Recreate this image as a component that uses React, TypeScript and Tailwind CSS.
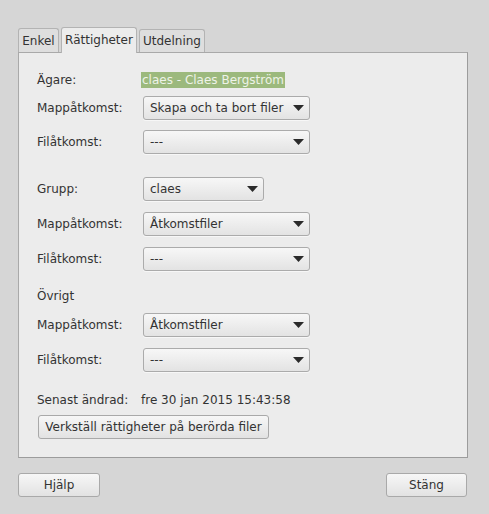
import React from "react";

const font = { fontFamily: '"DejaVu Sans", "Liberation Sans", sans-serif' };

function Arrow() {
  return (
    <svg width="11" height="6" viewBox="0 0 11 6" className="shrink-0">
      <path d="M0 0 L11 0 L5.5 6 Z" fill="#2b2b2b" />
    </svg>
  );
}

function Combo({ value, width }: { value: string; width: string }) {
  return (
    <div
      className={`flex h-[24px] ${width} items-center justify-between rounded-[3px] border border-[#ababab] bg-gradient-to-b from-[#f7f7f7] to-[#e3e3e3] pl-[6px] pr-[5px] shadow-[0_1px_0_rgba(255,255,255,0.6)]`}
    >
      <span className="whitespace-nowrap leading-[16px]">{value}</span>
      <Arrow />
    </div>
  );
}

function Row({ label, children, className = "" }: { label: string; children?: React.ReactNode; className?: string }) {
  return (
    <div className={`flex h-[24px] items-center ${className}`}>
      <span className="w-[106px] shrink-0">{label}</span>
      {children}
    </div>
  );
}

function Button({ children, className = "" }: { children: React.ReactNode; className?: string }) {
  return (
    <button
      className={`flex h-[24px] items-center justify-center rounded-[3px] border border-[#a9a9a9] bg-gradient-to-b from-[#f7f7f7] to-[#e2e2e2] text-[#333] ${className}`}
    >
      {children}
    </button>
  );
}

export default function App() {
  return (
    <div style={font} className="flex h-[514px] w-[489px] flex-col bg-[#d6d6d6] pl-[18px] pr-[21px] pt-[26px] text-[12px] leading-[16px] text-[#333]">
      <div className="relative z-10 flex h-[26px] items-end">
        <div className="flex h-[24px] w-[41px] items-center justify-center rounded-t-[3px] border border-b-0 border-[#b3b3b3] bg-[#dedede]">
          Enkel
        </div>
        <div className="ml-[2px] mb-[-1px] flex h-[26px] w-[76px] items-center justify-center rounded-t-[3px] border border-b-0 border-[#b3b3b3] bg-[#ececec] pb-[2px]">
          Rättigheter
        </div>
        <div className="ml-[2px] flex h-[23px] w-[66px] items-center justify-center rounded-t-[3px] border border-b-0 border-[#b3b3b3] bg-[#dedede]">
          Utdelning
        </div>
      </div>

      <div className="flex h-[406px] flex-col border border-[#a9a9a9] border-r-[#9c9c9c] border-b-[#9c9c9c] bg-[#ececec] pl-[18px] pt-[15px]">
        <Row label="Ägare:">
          <span className="ml-[-2px] bg-[#9cb97d] px-[1px] text-[#eef3e8]">claes - Claes Bergström</span>
        </Row>
        <Row label="Mappåtkomst:" className="mt-[4px]">
          <Combo value="Skapa och ta bort filer" width="w-[167px]" />
        </Row>
        <Row label="Filåtkomst:" className="mt-[10px]">
          <Combo value="---" width="w-[167px]" />
        </Row>

        <Row label="Grupp:" className="mt-[23px]">
          <Combo value="claes" width="w-[121px]" />
        </Row>
        <Row label="Mappåtkomst:" className="mt-[11px]">
          <Combo value="Åtkomstfiler" width="w-[167px]" />
        </Row>
        <Row label="Filåtkomst:" className="mt-[11px]">
          <Combo value="---" width="w-[167px]" />
        </Row>

        <Row label="Övrigt" className="mt-[13px]" />
        <Row label="Mappåtkomst:" className="mt-[5px]">
          <Combo value="Åtkomstfiler" width="w-[167px]" />
        </Row>
        <Row label="Filåtkomst:" className="mt-[11px]">
          <Combo value="---" width="w-[167px]" />
        </Row>

        <div className="mt-[16px] flex h-[24px] items-center">
          <span className="w-[104px]">Senast ändrad:</span>
          <span>fre 30 jan 2015 15:43:58</span>
        </div>
        <Button className="mt-[3px] ml-[1px] w-[231px]">Verkställ rättigheter på berörda filer</Button>
      </div>

      <div className="mt-[15px] flex items-center justify-between">
        <Button className="w-[82px]">Hjälp</Button>
        <Button className="mr-[1px] w-[81px]">Stäng</Button>
      </div>
    </div>
  );
}
